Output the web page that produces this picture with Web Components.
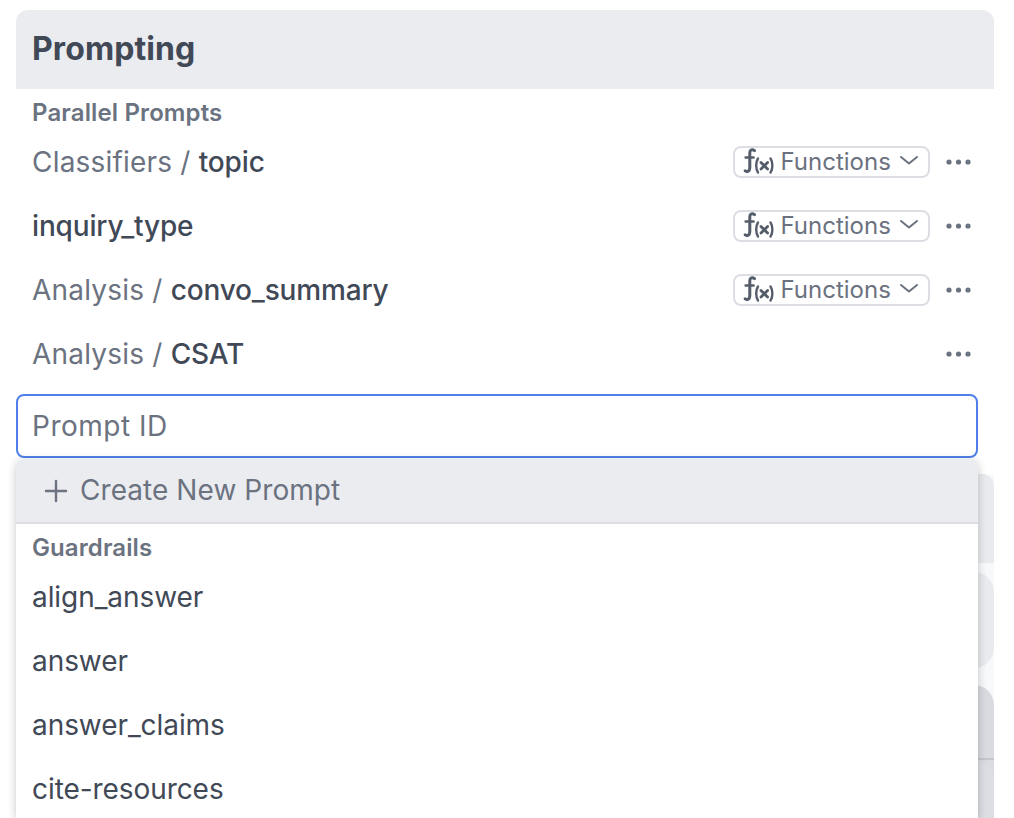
<!DOCTYPE html>
<html>
<head>
<meta charset="utf-8">
<title>Prompting</title>
<style>
    html, body { margin: 0; height: 818px; overflow: hidden; background: #ffffff; }
    body { font-family: Inter, "Noto Sans", sans-serif; }
</style>
</head>
<body>
<prompt-editor>
    <prompt-row prefix="Classifiers / " name="topic" functions></prompt-row>
    <prompt-row name="inquiry_type" functions></prompt-row>
    <prompt-row prefix="Analysis / " name="convo_summary" functions></prompt-row>
    <prompt-row prefix="Analysis / " name="CSAT"></prompt-row>
    <prompt-dropdown slot="picker">
        <option-item>align_answer</option-item>
        <option-item>answer</option-item>
        <option-item>answer_claims</option-item>
        <option-item>cite-resources</option-item>
    </prompt-dropdown>
</prompt-editor>

<script>
// Menu de funciones + puntos de la fila
class FunctionsChip extends HTMLElement {
    constructor() {
        super();
        const shadow = this.attachShadow({ mode: 'open' });
        shadow.innerHTML = `
            <style>
                :host {
                    display: flex;
                    align-items: center;
                    box-sizing: border-box;
                    width: 197px;
                    height: 32px;
                    padding-left: 8px;
                    border: 2px solid #dcdee3;
                    border-radius: 8px;
                    color: #6b7280;
                    font-size: 24px;
                    line-height: 28px;
                }
                .fx { width: 32px; height: 28px; margin-right: 5.5px; flex: none; }
                .chev { width: 20px; height: 12px; margin-left: 8.5px; margin-top: -5px; flex: none; }
            </style>
            <svg class="fx" viewBox="0 0 32 28" fill="none" stroke="#565d6a" stroke-linecap="round">
                <path d="M11.5 2.6C9.4 1 6.8 1.8 6.8 4.8V20C6.8 23 4.2 24.4 2.2 22.8" stroke-width="3"/>
                <path d="M2.6 9.5H10.6" stroke-width="2.4"/>
                <path d="M15 10.5C12.6 14 12.6 21 15 24.5" stroke-width="2.4"/>
                <path d="M27.5 10.5C30 14 30 21 27.5 24.5" stroke-width="2.4"/>
                <path d="M18 14.5L24.6 21M24.6 14.5L18 21" stroke-width="2.8"/>
            </svg>
            <span>Functions</span>
            <svg class="chev" viewBox="0 0 20 12" fill="none" stroke="#6b7280" stroke-width="2" stroke-linecap="round" stroke-linejoin="round">
                <path d="M2 3L10 9.5L18 3"/>
            </svg>
        `;
    }
}

class PromptRow extends HTMLElement {
    constructor() {
        super();
        const shadow = this.attachShadow({ mode: 'open' });
        const prefix = this.getAttribute('prefix') || '';
        const chip = this.hasAttribute('functions') ? '<functions-chip></functions-chip>' : '';
        shadow.innerHTML = `
            <style>
                :host {
                    display: flex;
                    align-items: center;
                    height: 64px;
                    padding-left: 16px;
                    font-size: 28px;
                }
                .label { flex: 1; white-space: pre; color: #6b7280; letter-spacing: 0.2px; }
                .name { color: #414957; font-weight: 450; letter-spacing: -0.15px; }
                .dots { width: 25px; height: 6px; margin: 0 23px 0 16px; flex: none; }
            </style>
            <span class="label">${prefix}<span class="name">${this.getAttribute('name')}</span></span>
            ${chip}
            <svg class="dots" viewBox="0 0 25 6" fill="#6b7280">
                <circle cx="3" cy="3" r="2.6"/><circle cx="12.5" cy="3" r="2.6"/><circle cx="22" cy="3" r="2.6"/>
            </svg>
        `;
    }
}

class OptionItem extends HTMLElement {
    constructor() {
        super();
        const shadow = this.attachShadow({ mode: 'open' });
        shadow.innerHTML = `
            <style>
                :host {
                    display: flex;
                    align-items: center;
                    height: 64px;
                    padding-left: 16px;
                    color: #414957;
                    font-size: 28px;
                    letter-spacing: -0.07px;
                }
            </style>
            <slot></slot>
        `;
    }
}

class PromptDropdown extends HTMLElement {
    constructor() {
        super();
        const shadow = this.attachShadow({ mode: 'open' });
        shadow.innerHTML = `
            <style>
                :host {
                    position: absolute;
                    top: 459px;
                    left: 16px;
                    width: 962px;
                    height: 359px;
                    background: #ffffff;
                    border-radius: 8px 8px 0 0;
                    box-shadow: 0 2px 10px rgba(0, 0, 0, 0.22);
                    overflow: hidden;
                }
                .create {
                    display: flex;
                    align-items: center;
                    box-sizing: border-box;
                    height: 65px;
                    padding: 0 0 2px 28px;
                    background: #ebecf0;
                    border-bottom: 2px solid #dcdee3;
                    color: #6b7280;
                    font-size: 28px;
                    letter-spacing: 0.06px;
                }
                .create svg { width: 24px; height: 24px; margin: 2px 12px 0 0; }
                .group {
                    padding: 10px 16px 0;
                    height: 31px;
                    color: #6b7280;
                    font-size: 24px;
                    line-height: 28px;
                    font-weight: 600;
                    letter-spacing: 0.1px;
                }
            </style>
            <div class="create">
                <svg viewBox="0 0 24 24" fill="none" stroke="#6b7280" stroke-width="2.4" stroke-linecap="round">
                    <path d="M12 2V22M2 12H22"/>
                </svg>
                <span>Create New Prompt</span>
            </div>
            <div class="group">Guardrails</div>
            <div class="list"><slot></slot></div>
        `;
    }
}

class PromptEditor extends HTMLElement {
    constructor() {
        super();
        const shadow = this.attachShadow({ mode: 'open' });
        shadow.innerHTML = `
            <style>
                :host { display: block; height: 808px; overflow: hidden; padding: 10px 20px 0 16px; color: #414957; }
                header {
                    display: flex;
                    align-items: center;
                    box-sizing: border-box;
                    height: 79px;
                    padding: 0 0 2px 16px;
                    background: #ebecf0;
                    border-radius: 12px 12px 0 0;
                    font-size: 32px;
                    font-weight: 700;
                    letter-spacing: 0.1px;
                }
                .sub {
                    height: 42px;
                    padding: 10px 16px 0;
                    box-sizing: border-box;
                    color: #6b7280;
                    font-size: 24px;
                    line-height: 28px;
                    font-weight: 600;
                    letter-spacing: 0.13px;
                }
                .rows { margin-top: -1px; width: 978px; }
                .input {
                    display: flex;
                    align-items: center;
                    box-sizing: border-box;
                    width: 962px;
                    height: 64px;
                    padding-left: 14px;
                    margin-top: 8px;
                    border: 2px solid #4f80ea;
                    border-radius: 8px;
                    color: #6b7280;
                    font-size: 28px;
                    letter-spacing: 0.5px;
                }
                .below { margin-top: 16px; display: flex; flex-direction: column; background: #f8f9fb; }
                .p1 { height: 89px; background: #e9ebef; border-radius: 12px 12px 0 0; }
                .p2 { height: 96px; margin-top: 9px; background: #e9ebef; border-radius: 20px; }
                .p3 { height: 133px; margin-top: 17px; background: #d9dbe1; border-radius: 20px 20px 0 0; }
                .p3 hr { margin: 73px 0 0; height: 2px; border: 0; background: #c6c7ce; }
                .p4 { height: 58px; background: #dcdee3; border-radius: 0 20px 0 0; }
            </style>
            <header>Prompting</header>
            <div class="sub">Parallel Prompts</div>
            <div class="rows"><slot></slot></div>
            <div class="input">Prompt ID</div>
            <div class="below">
                <div class="p1"></div>
                <div class="p2"></div>
                <div class="p3">
                    <hr>
                    <div class="p4"></div>
                </div>
            </div>
            <slot name="picker"></slot>
        `;
    }
}

customElements.define('functions-chip', FunctionsChip);
customElements.define('prompt-row', PromptRow);
customElements.define('option-item', OptionItem);
customElements.define('prompt-dropdown', PromptDropdown);
customElements.define('prompt-editor', PromptEditor);
</script>
</body>
</html>
